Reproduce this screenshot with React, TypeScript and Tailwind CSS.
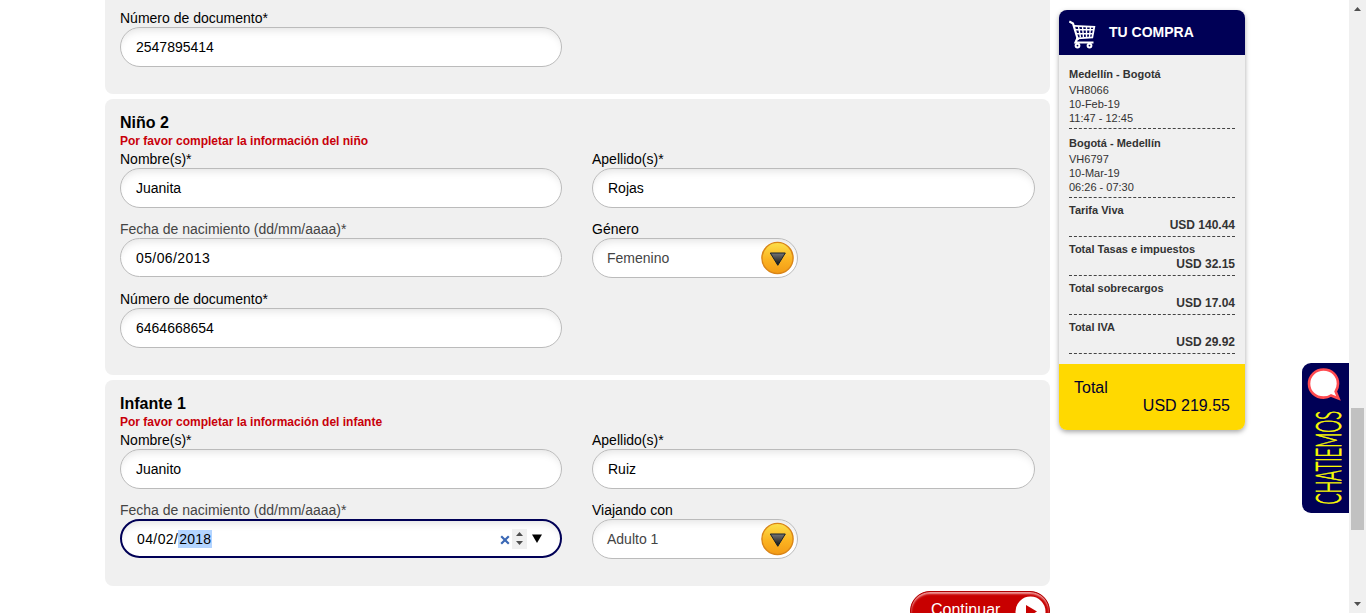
import type { ReactNode } from 'react';

function Label({ children, muted = false }: { children: ReactNode; muted?: boolean }) {
  return (
    <div className={`h-[18px] text-[14px] leading-[18px] whitespace-nowrap ${muted ? 'text-[#444]' : 'text-black'}`}>
      {children}
    </div>
  );
}

function TextField({ label, value, date = false }: { label: string; value: string; date?: boolean }) {
  return (
    <div className="h-[58px]">
      <Label muted={date}>{label}</Label>
      <div
        className={`flex items-center rounded-[20px] border border-[#bbb] bg-white px-[15px] text-[14px] text-black shadow-[inset_0_7px_9px_-5px_#e2e2e2] ${date ? 'h-[39px] pt-px tracking-[0.4px]' : 'h-10'}`}
      >
        {value}
      </div>
    </div>
  );
}

function ActiveDateField() {
  return (
    <div className="h-[58px]">
      <Label muted>Fecha de nacimiento (dd/mm/aaaa)*</Label>
      <div className="flex h-[39px] items-center rounded-[20px] border-2 border-[#000056] bg-white pr-[16px] pl-[15px] text-[14px] text-black shadow-[inset_0_7px_9px_-5px_#e2e2e2]">
        <span className="pt-px tracking-[0.4px]">04/02/</span>
        <span className="mt-px h-[18px] bg-[#b3d4ff] px-px leading-[18px] tracking-[0.2px]">2018</span>
        <svg className="mt-[3px] ml-auto" width="10" height="10" viewBox="0 0 10 10">
          <path d="M1.2 1.2 8.8 8.8M8.8 1.2 1.2 8.8" stroke="#3b68b5" strokeWidth="2.2" />
        </svg>
        <span className="mr-px ml-[2px] flex h-5 w-[15px] flex-col items-center justify-center gap-[5px] bg-[#f0f0f0]">
          <svg width="7" height="4" viewBox="0 0 7 4"><path d="M0 4 3.5 0 7 4z" fill="#505050" /></svg>
          <svg width="7" height="4" viewBox="0 0 7 4"><path d="M0 0 3.5 4 7 0z" fill="#505050" /></svg>
        </span>
        <svg className="mr-[2px] ml-[4px]" width="10" height="9" viewBox="0 0 10 9"><path d="M0 0.5h10L5 9z" fill="#000" /></svg>
      </div>
    </div>
  );
}

function SelectField({ label, value, id }: { label: string; value: string; id: string }) {
  return (
    <div className="h-[58px]">
      <Label>{label}</Label>
      <div className="flex h-10 w-[206px] items-center justify-between rounded-[20px] border border-[#bbb] bg-white pr-[2px] pl-[14px] text-[14px] text-[#444] shadow-[inset_0_7px_9px_-5px_#e2e2e2]">
        <span>{value}</span>
        <svg width="35" height="34" viewBox="0 0 35 34">
          <defs>
            <linearGradient id={`${id}-disc`} x1="0" y1="0" x2="0" y2="1">
              <stop offset="0" stopColor="#fce04a" />
              <stop offset="0.55" stopColor="#fbb321" />
              <stop offset="1" stopColor="#f39b15" />
            </linearGradient>
            <linearGradient id={`${id}-arrow`} x1="0" y1="0" x2="0" y2="1">
              <stop offset="0" stopColor="#777" />
              <stop offset="0.8" stopColor="#222" />
            </linearGradient>
          </defs>
          <circle cx="17.5" cy="17" r="15.6" fill={`url(#${id}-disc)`} stroke="#d98518" strokeWidth="1.4" />
          <path d="M10.3 12h15L17.8 24.3z" fill={`url(#${id}-arrow)`} stroke="#15202b" strokeWidth="1" />
        </svg>
      </div>
    </div>
  );
}

function Panel({ title, message, children }: { title: string; message: string; children: ReactNode }) {
  return (
    <section className="rounded-[8px] bg-[#f0f0f0] px-[15px] pt-[14px] pb-[27px]">
      <h2 className="h-[19px] text-[16px] leading-[19px] font-bold text-black">{title}</h2>
      <p className="h-[18px] text-[12px] leading-[18px] font-bold text-[#c8000a]">{message}</p>
      <div className="grid grid-cols-[442px_443px] gap-x-[30px] gap-y-3">{children}</div>
    </section>
  );
}

function Flight({ route, code, date, time }: { route: string; code: string; date: string; time: string }) {
  return (
    <div className="h-[69px] border-b border-dashed border-[#444] pt-[6px] text-[11px] leading-[14px]">
      <div className="h-[17px] leading-4 font-bold">{route}</div>
      <div>{code}</div>
      <div>{date}</div>
      <div>{time}</div>
    </div>
  );
}

function Charge({ name, amount }: { name: string; amount: string }) {
  return (
    <div className="h-[39px] border-b border-dashed border-[#444] pt-[5px] font-bold">
      <div className="h-[15px] text-[11px] leading-[15px]">{name}</div>
      <div className="text-right text-[12px] leading-[14px]">{amount}</div>
    </div>
  );
}

function CartIcon() {
  return (
    <svg width="27" height="29" viewBox="0 0 27 29" fill="none" stroke="#fff">
      <path d="M0.3 1.5 4 3.5 9 20" strokeWidth="2.2" />
      <path d="M5 5.8 25.3 6.8 23.3 17.3 8.5 18.3" strokeWidth="1.8" />
      <path d="M6 9.8H24.5M7 13.8H23.5M9.5 6.5 11.5 17.5M13.5 6.5 14.5 17.5M17.5 7V17M21.5 7 20.5 17" strokeWidth="1.4" />
      <path d="M8.5 18 6.5 22.5H24.5" strokeWidth="2.2" />
      <circle cx="8.5" cy="25.6" r="1.9" strokeWidth="2" />
      <circle cx="20.5" cy="25.6" r="1.9" strokeWidth="2" />
    </svg>
  );
}

function Summary() {
  return (
    <aside className="mt-[10px] ml-[9px] h-[420px] w-[186px] shrink-0 overflow-hidden rounded-[8px] bg-[#f0f0f0] text-[#333] shadow-[0_2px_5px_rgba(0,0,0,0.35)]">
      <div className="flex h-[45px] items-center bg-[#000056] pl-[10px] text-[14px] font-bold text-white">
        <span className="mt-[4px]"><CartIcon /></span>
        <span className="ml-[13px]">TU COMPRA</span>
      </div>
      <div className="h-[309px] px-[10px] pt-[5px]">
        <Flight route="Medellín - Bogotá" code="VH8066" date="10-Feb-19" time="11:47 - 12:45" />
        <Flight route="Bogotá - Medellín" code="VH6797" date="10-Mar-19" time="06:26 - 07:30" />
        <Charge name="Tarifa Viva" amount="USD 140.44" />
        <Charge name="Total Tasas e impuestos" amount="USD 32.15" />
        <Charge name="Total sobrecargos" amount="USD 17.04" />
        <Charge name="Total IVA" amount="USD 29.92" />
      </div>
      <div className="h-[66px] bg-[#ffd900] px-[15px] pt-[15px] text-[16px] leading-[18px] text-[#00002e]">
        <div>Total</div>
        <div className="text-right">USD 219.55</div>
      </div>
    </aside>
  );
}

function ChatTab() {
  return (
    <div className="mt-[363px] ml-auto h-[150px] w-[47px] shrink-0 rounded-l-[9px] bg-[#000056]">
      <svg width="47" height="150" viewBox="0 0 47 150">
        <path
          d="M21.5 6.500C30 6.500 36 12.700 36 20.700c0 3.400-1 5.600-2.300 7.800L36.500 35.500l-7.500-3c-2.200 1.400-4.700 2.100-7.500 2.100C13.500 34.600 7 28.800 7 20.700 7 12.700 13.500 6.500 21.500 6.500z"
          fill="#fff"
          stroke="#ff4b50"
          strokeWidth="2.6"
        />
        <text
          transform="translate(39 141.500) rotate(-90) scale(0.5 1)"
          fontFamily="Lato, 'Open Sans', sans-serif"
          fontSize="35"
          fontWeight="300"
          fill="#ff0"
          stroke="#ff0"
          strokeWidth="0.6"
          vectorEffect="non-scaling-stroke"
          textLength="187"
          lengthAdjust="spacingAndGlyphs"
        >
          CHATIEMOS
        </text>
      </svg>
    </div>
  );
}

function Scrollbar() {
  return (
    <div className="flex h-full w-[17px] shrink-0 flex-col items-center bg-[#f0f0f0]">
      <svg className="mt-[7px]" width="7" height="4" viewBox="0 0 7 4"><path d="M0 4 3.5 0 7 4z" fill="#505050" /></svg>
      <div className="mt-[397px] h-[122px] w-[13px] bg-[#c1c1c1]" />
      <svg className="mt-auto mb-[7px]" width="7" height="4" viewBox="0 0 7 4"><path d="M0 0 3.5 4 7 0z" fill="#505050" /></svg>
    </div>
  );
}

export default function App() {
  return (
    <div className="flex h-[613px] w-[1366px] overflow-hidden bg-white pl-[105px] font-['Liberation_Sans',Arial,sans-serif]">
      <main className="flex w-[945px] shrink-0 flex-col gap-[5px]">
        <section className="h-[94px] shrink-0 rounded-b-[8px] bg-[#f0f0f0] px-[15px] pt-[9px]">
          <div className="w-[442px]">
            <TextField label="Número de documento*" value="2547895414" />
          </div>
        </section>
        <Panel title="Niño 2" message="Por favor completar la información del niño">
          <TextField label="Nombre(s)*" value="Juanita" />
          <TextField label="Apellido(s)*" value="Rojas" />
          <TextField label="Fecha de nacimiento (dd/mm/aaaa)*" value="05/06/2013" date />
          <SelectField label="Género" value="Femenino" id="gender" />
          <TextField label="Número de documento*" value="6464668654" />
        </Panel>
        <Panel title="Infante 1" message="Por favor completar la información del infante">
          <TextField label="Nombre(s)*" value="Juanito" />
          <TextField label="Apellido(s)*" value="Ruiz" />
          <ActiveDateField />
          <SelectField label="Viajando con" value="Adulto 1" id="companion" />
        </Panel>
        <button className="flex h-[40px] w-[140px] shrink-0 items-start justify-between self-end rounded-[20px] border border-[#b00000] bg-[#c80000] pt-[4px] pr-[3px] pl-[20px] text-[16px] text-white shadow-[inset_0_2px_2px_#ef9a9a]">
          <span className="mt-[4px] leading-[20px]">Continuar</span>
          <svg width="31" height="31" viewBox="0 0 31 31">
            <circle cx="15.5" cy="15.5" r="15" fill="#fff" />
            <path d="M11 9 22 15.5 11 22z" fill="#c80000" />
          </svg>
        </button>
      </main>
      <Summary />
      <ChatTab />
      <Scrollbar />
    </div>
  );
}
